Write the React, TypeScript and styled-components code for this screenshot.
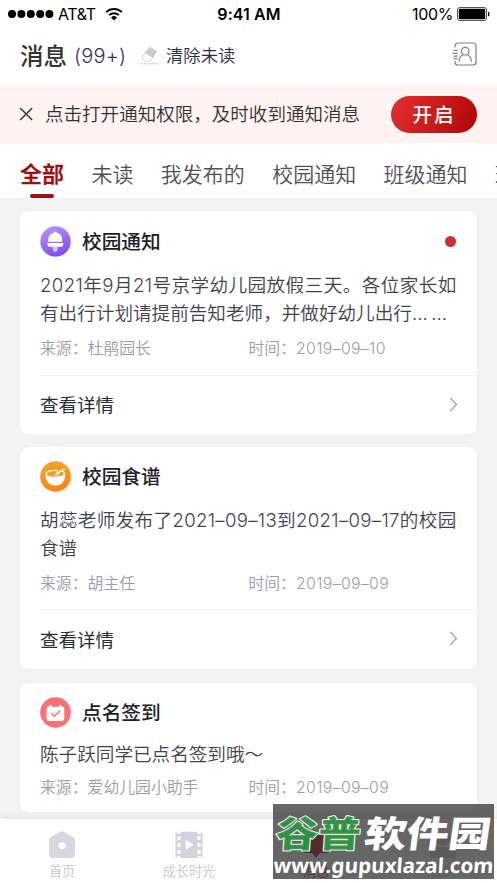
import React from "react";
import styled, { createGlobalStyle } from "styled-components";

const GlobalStyle = createGlobalStyle`
  * { box-sizing: border-box; }
  body { margin: 0; background: #f3f3f3; font-family: Inter, "Noto Sans CJK SC", sans-serif; overflow: hidden; }
`;

const Screen = styled.div`
  position: relative;
  width: 497px;
  height: 883px;
  overflow: hidden;
  display: flex;
  flex-direction: column;
  background: #f3f3f3;
  white-space: nowrap;
`;

const StatusBar = styled.div`
  height: 28px;
  flex: none;
  display: grid;
  grid-template-columns: 1fr auto 1fr;
  align-items: center;
  padding: 0 7px 0 8px;
  background: #fff;
  color: #000;
  font-size: 16px;
  line-height: 28px;
`;

const StatusGroup = styled.div<{ $end?: boolean }>`
  display: flex;
  align-items: center;
  justify-content: ${(p) => (p.$end ? "flex-end" : "flex-start")};
  gap: 4px;
`;

const Carrier = styled.span`
  font-size: 16px;
  letter-spacing: -0.4px;
  margin-right: 5px;
`;

const Clock = styled.span`
  font-weight: 600;
  font-size: 16px;
  letter-spacing: 0.1px;
`;

const Percent = styled.span`
  letter-spacing: -0.35px;
  font-size: 16px;
`;

const TitleBar = styled.header`
  height: 57px;
  flex: none;
  display: flex;
  align-items: center;
  padding: 0 20px 2px;
  background: #fff;
`;

const PageTitle = styled.h1`
  margin: 2px 0 0;
  font-size: 23.5px;
  font-weight: 500;
  line-height: 34px;
  color: #333236;
`;

const Count = styled.span`
  margin: 1px 14px 0 7px;
  font-size: 20px;
  letter-spacing: 0.2px;
  font-weight: 350;
  color: #34334c;
`;

const ClearLabel = styled.span`
  flex: 1;
  margin: 0 0 2px 6px;
  font-size: 17.3px;
  font-weight: 350;
  color: #2c2b47;
`;

const Banner = styled.section`
  height: 58px;
  flex: none;
  display: flex;
  align-items: center;
  padding: 0 20px 0 19px;
  background: #fff4f2;
`;

const BannerText = styled.span`
  flex: 1;
  margin: 0 0 3px 11px;
  font-size: 18.55px;
  font-weight: 350;
  color: #3c2d2f;
`;

const EnableButton = styled.button`
  width: 86px;
  height: 37px;
  padding: 0;
  border: 0;
  border-radius: 19px;
  background: linear-gradient(115deg, #e42f30 0%, #c9191a 55%, #ad0607 100%);
  color: #fff;
  font: 500 19.5px/36px "Noto Sans CJK SC", sans-serif;
  letter-spacing: 2px;
`;

const Tabs = styled.nav`
  height: 55px;
  flex: none;
  display: flex;
  gap: 27.4px;
  padding-left: 20px;
  background: #fff;
`;

const Tab = styled.div<{ $active?: boolean }>`
  flex: none;
  display: flex;
  flex-direction: column;
  align-items: center;
  justify-content: space-between;
  padding-top: 15px;
  font-size: ${(p) => (p.$active ? 22 : 21)}px;
  line-height: ${(p) => (p.$active ? 32 : 33)}px;
  font-weight: ${(p) => (p.$active ? 700 : 350)};
  color: ${(p) => (p.$active ? "#a30d10" : "#4f4f5a")};
`;

const Underline = styled.span`
  width: 24px;
  height: 4px;
  border-radius: 2px;
  background: #a30d10;
`;

const Feed = styled.main`
  flex: none;
  height: 621px;
  display: flex;
  flex-direction: column;
  padding: 13px 20px 0;
`;

const Card = styled.article<{ $gap: number; $top: number }>`
  flex: none;
  padding: ${(p) => p.$top}px 0 0 20px;
  margin-bottom: ${(p) => p.$gap}px;
  border-radius: 9px;
  background: #fff;
`;

const CardHeader = styled.div`
  height: 30px;
  display: flex;
  align-items: center;
  padding-right: 21px;
`;

const CardTitle = styled.h2`
  flex: 1;
  margin: 2px 0 0 11px;
  font-size: 19.7px;
  line-height: 30px;
  font-weight: 500;
  color: #1d2129;
`;

const UnreadDot = styled.span`
  width: 11px;
  height: 11px;
  border-radius: 50%;
  background: #d22e31;
`;

const Body = styled.p<{ $top: number }>`
  margin: ${(p) => p.$top}px 0 0;
  font-size: 18.6px;
  font-weight: 350;
  line-height: 28px;
  color: #42424e;
`;

const BodyLine = styled.span<{ $spacing?: number }>`
  display: block;
  letter-spacing: ${(p) => p.$spacing || 0}px;
`;

const Meta = styled.div<{ $top: number; $bottom: number }>`
  display: grid;
  grid-template-columns: 208.5px 1fr;
  margin-top: ${(p) => p.$top}px;
  padding-bottom: ${(p) => p.$bottom}px;
  font-size: 15.85px;
  font-weight: 350;
  line-height: 22px;
  color: #9c9caa;
`;

const DateText = styled.span`
  letter-spacing: 0.33px;
`;

const Dotted = styled.span`
  letter-spacing: 3.5px;
`;

const CardFooter = styled.div<{ $height: number }>`
  height: ${(p) => p.$height}px;
  display: flex;
  align-items: center;
  justify-content: space-between;
  padding: 0 19px 2px 0;
  border-top: 1px solid #f0f0f2;
  font-size: 18.5px;
  font-weight: 400;
  color: #292c34;
`;

const BottomBar = styled.footer`
  position: relative;
  height: 64px;
  flex: none;
  display: grid;
  grid-template-columns: repeat(4, 127px);
  background: #fff;
  box-shadow: 0 -2px 7px rgba(40, 40, 70, 0.09);
`;

const NavItem = styled.div<{ $active?: boolean }>`
  display: flex;
  flex-direction: column;
  align-items: center;
  padding: 12px 3px 0 0;
  color: ${(p) => (p.$active ? "#b61a1d" : "#c3c5d3")};
  font-size: 13.1px;
  font-weight: 350;
  line-height: 20px;
  gap: 2px;
`;

const Watermark = styled.aside`
  position: absolute;
  left: 273px;
  top: 804px;
  width: 221px;
  height: 75px;
  background: rgba(51, 51, 51, 0.75);
`;

const WatermarkSvg = styled.svg`
  display: block;
  overflow: visible;
`;

const WatermarkArt = () => (
  <WatermarkSvg width="221" height="75">
    <g fontFamily="Noto Sans CJK SC" fontWeight="900" fontSize="42" strokeLinejoin="round">
      <text transform="translate(2 43) skewX(-4) scale(1 .86)" textLength="85" lengthAdjust="spacingAndGlyphs" fill="#2f9443" fillOpacity=".93" stroke="#e4f2e4" strokeWidth="2.4" paintOrder="stroke">谷普</text>
      <text transform="translate(90 43) skewX(-8) scale(1 .86)" textLength="126" lengthAdjust="spacingAndGlyphs" fill="#fff">软件园</text>
    </g>
    <text transform="translate(0 68.5) skewX(-4)" textLength="220" lengthAdjust="spacingAndGlyphs" fontFamily="Noto Sans" fontWeight="700" fontSize="20.5" fill="#fff">www.gupuxlazal.com</text>
  </WatermarkSvg>
);

const Dots = () => (
  <svg width="46" height="10" viewBox="0 0 46 10">
    {[4, 13.4, 22.8, 32.2, 41.4].map((x) => <circle key={x} cx={x} cy="5" r="4" />)}
  </svg>
);

const Wifi = () => (
  <svg width="18" height="14" viewBox="0 0 18 14" fill="none" stroke="#000" strokeWidth="2">
    <path d="M1.2 5.1a11.3 11.3 0 0 1 15.6 0M4.1 8.1a7.1 7.1 0 0 1 9.8 0" />
    <path d="M6 10.4a4.5 4.5 0 0 1 6 0L9 13.4Z" fill="#000" stroke="none" />
  </svg>
);

const Battery = () => (
  <svg width="33" height="14" viewBox="0 0 33 14">
    <rect x=".5" y=".5" width="29" height="13" rx="2.5" fill="#fff" stroke="#555" />
    <rect x="1.8" y="1.8" width="26.4" height="10.4" rx="1.3" />
    <path d="M31 4.4c2 .7 2 4.5 0 5.2Z" />
  </svg>
);

const Eraser = () => (
  <svg width="20" height="19" viewBox="0 0 20 19" fill="none">
    <path d="m9.5 1.2 7 4-5.1 8.7-4.8 2-4-2.8-.1-2.3Z" fill="#fff" stroke="#d0d2d7" strokeLinejoin="round" />
    <path d="m9.8 1 7 4.4-4.2 6.7-7.3-5Z" fill="#c9ccd3" />
    <path d="M1 17.8h17.5" stroke="#d0d2d7" />
  </svg>
);

const ContactsSvg = styled.svg`
  margin-bottom: 3px;
`;

const Contacts = () => (
  <ContactsSvg width="25" height="24" viewBox="0 0 25 24" fill="none" stroke="#7f7f82" strokeWidth="1.2">
    <path d="M3 5.5V4Q3 1 6 1h15q3 0 3 3v16q0 3-3 3H6q-3 0-3-3v-1.5" />
    <path d="M1.5 8.4h4M0.5 11.3h5M1.5 14.2h4M2 16.7h3.5" />
    <circle cx="13.2" cy="9.2" r="3.8" />
    <path d="M7 19.8c.2-4 2-6.4 4.2-7.1M15.2 12.7c2.2.7 4 3.1 4.2 7.1" />
  </ContactsSvg>
);

const Close = () => (
  <svg width="15" height="14" viewBox="0 0 15 14" stroke="#342829" strokeWidth="1.3">
    <path d="m1.2 1 12 12M13.2 1l-12 12" />
  </svg>
);

const Chevron = () => (
  <svg width="9" height="15" viewBox="0 0 9 15" fill="none" stroke="#a3a3aa" strokeWidth="1.3">
    <path d="m1.2 1 6.2 6.5L1.2 14" />
  </svg>
);

const BellIcon = () => (
  <svg width="31" height="31" viewBox="0 0 31 31">
    <defs><linearGradient id="bell" x2=".4" y2="1"><stop stopColor="#ba98fa" /><stop offset="1" stopColor="#8651ee" /></linearGradient></defs>
    <circle cx="15.5" cy="15.5" r="15.2" fill="url(#bell)" />
    <path d="M12.5 21h5.5c0 2.4-.8 4.9-2.7 4.9S12.5 23.4 12.5 21Z" fill="#d8c6ff" />
    <path d="M13.6 6.8a1.8 1.8 0 0 1 3.4 0c3.5 1 5.2 3.6 5.2 7v1.9H8.2v-1.9c0-3.4 1.9-6 5.4-7Z" fill="#fff" />
    <path d="M7.4 17h15.8v1.6q0 2.2-2.2 2.2H9.6q-2.2 0-2.2-2.2Z" fill="#fff" />
  </svg>
);

const BowlIcon = () => (
  <svg width="31" height="31" viewBox="0 0 31 31">
    <defs><linearGradient id="bowl" x2=".3" y2="1"><stop stopColor="#f6a52e" /><stop offset="1" stopColor="#fa8715" /></linearGradient></defs>
    <circle cx="15.5" cy="15.5" r="15.3" fill="url(#bowl)" />
    <path d="M5.4 13c0 7 3.8 11.5 10 11.5s9.8-4.5 9.8-11.5c-2.2 5-17.5 5.2-19.8 0Z" fill="#fff" />
    <path d="M21.8 10.2c2 .6 2.9 1.4 2.7 2.5-.4 2.2-4.4 3.6-9.2 3.6s-9-1.4-9.2-3.6c-.2-2.2 6-4 12-3.1" fill="none" stroke="#fff" strokeWidth="1.3" />
    <path d="M25.2 8 20 11.4c-.6 2.3-3.2 3.6-6.2 3 1.2-2 2.8-3.4 5.2-3.9L24.3 7Z" fill="#fff" />
  </svg>
);

const CalendarIcon = () => (
  <svg width="31" height="31" viewBox="0 0 31 31">
    <circle cx="15.5" cy="15.5" r="15.3" fill="#fb7074" />
    <rect x="6.5" y="10" width="17.8" height="14" rx="2.4" fill="#fff" />
    <path d="M7 11V9.8h2.3V9q0-1.2 1.2-1.2T11.7 9v.8h7.7V9q0-1.2 1.2-1.2T21.8 9v.8H24V12Z" fill="#fff" />
    <path d="m11.2 16.3 3.2 3 5.8-5.5" fill="none" stroke="#fb7074" strokeWidth="1.5" />
  </svg>
);

const Home = () => (
  <svg width="28" height="28" viewBox="0 0 28 28">
    <path d="M12.1.8q1.9-1 3.8 0l9.3 5.4Q27 7.3 27 9.4V23q0 4-4 4H5q-4 0-4-4V9.4q0-2.1 1.8-3.2Z" fill="#d5d7e2" />
    <circle cx="14" cy="14.8" r="3.5" fill="#fff" />
  </svg>
);

const Film = () => (
  <svg width="28" height="28" viewBox="0 0 28 28">
    <path d="M.5 1.5h1.3v1.2h4V.7h16.4v2h4V1.5h1.3v25.2h-1.3v-1.4h-4V27H5.8v-1.7h-4v1.4H.5Z" fill="#d1d4df" />
    {[5.2, 12.2, 19.2].map((y) => <g key={y} fill="#fff"><rect x="2.4" y={y} width="3.2" height="3.6" /><rect x="22.4" y={y} width="3.2" height="3.6" /></g>)}
    <path d="M10.5 10.4q0-1.5 1.3-.8l6 3.6q1 .7 0 1.3l-6 3.6q-1.3.7-1.3-.8Z" fill="#fff" />
  </svg>
);

const Message = () => (
  <svg width="28" height="28" viewBox="0 0 28 28">
    <path d="M3 3h22q2 0 2 2v15q0 2-2 2h-7l-4 5-4-5H3q-2 0-2-2V5q0-2 2-2Z" fill="#b61a1d" />
  </svg>
);

const Profile = () => (
  <svg width="28" height="28" viewBox="0 0 28 28" fill="#d1d4df">
    <circle cx="14" cy="8" r="7" /><path d="M1 27V22q0-5 6-6h14q6 1 6 6v5Z" />
  </svg>
);

const notices = [
  {
    title: "校园通知", icon: <BellIcon />, unread: true,
    lines: [{ text: "2021年9月21号京学幼儿园放假三天。各位家长如", spacing: 0.42 }, { text: "有出行计划请提前告知老师，并做好幼儿出行", dots: true }],
    source: "杜鹃园长", date: "2019–09–10",
    top: 15, bodyTop: 15, metaTop: 11, metaBottom: 15, footer: 59, gap: 13,
  },
  {
    title: "校园食谱", icon: <BowlIcon />,
    lines: [{ text: "胡蕊老师发布了2021–09–13到2021–09–17的校园", spacing: 0.32 }, { text: "食谱" }],
    source: "胡主任", date: "2019–09–09",
    top: 14, bodyTop: 15, metaTop: 11, metaBottom: 14, footer: 60, gap: 14,
  },
  {
    title: "点名签到", icon: <CalendarIcon />,
    lines: [{ text: "陈子跃同学已点名签到哦～" }],
    source: "爱幼儿园小助手", date: "2019–09–09",
    top: 14, bodyTop: 13, metaTop: 9, metaBottom: 13, footer: 0, gap: 0,
  },
];

export default function App() {
  return (
    <Screen>
      <GlobalStyle />
      <StatusBar>
        <StatusGroup><Dots /><Carrier>AT&amp;T</Carrier><Wifi /></StatusGroup>
        <Clock>9:41 AM</Clock>
        <StatusGroup $end><Percent>100%</Percent><Battery /></StatusGroup>
      </StatusBar>
      <TitleBar>
        <PageTitle>消息</PageTitle><Count>(99+)</Count>
        <Eraser /><ClearLabel>清除未读</ClearLabel><Contacts />
      </TitleBar>
      <Banner>
        <Close /><BannerText>点击打开通知权限，及时收到通知消息</BannerText>
        <EnableButton>开启</EnableButton>
      </Banner>
      <Tabs>
        <Tab $active>全部<Underline /></Tab>
        {["未读", "我发布的", "校园通知", "班级通知", "班级"].map((t) => <Tab key={t}>{t}</Tab>)}
      </Tabs>
      <Feed>
        {notices.map((n) => (
          <Card key={n.title} $gap={n.gap} $top={n.top}>
            <CardHeader>{n.icon}<CardTitle>{n.title}</CardTitle>{n.unread && <UnreadDot />}</CardHeader>
            <Body $top={n.bodyTop}>
              {n.lines.map((l) => <BodyLine key={l.text} $spacing={l.spacing}>{l.text}{l.dots && <Dotted>……</Dotted>}</BodyLine>)}
            </Body>
            <Meta $top={n.metaTop} $bottom={n.metaBottom}>
              <span>来源：{n.source}</span><span>时间：<DateText>{n.date}</DateText></span>
            </Meta>
            {n.footer > 0 && <CardFooter $height={n.footer}>查看详情<Chevron /></CardFooter>}
          </Card>
        ))}
      </Feed>
      <BottomBar>
        <NavItem><Home />首页</NavItem>
        <NavItem><Film />成长时光</NavItem>
        <NavItem $active><Message />消息</NavItem>
        <NavItem><Profile />我的</NavItem>
      </BottomBar>
      <Watermark><WatermarkArt /></Watermark>
    </Screen>
  );
}
